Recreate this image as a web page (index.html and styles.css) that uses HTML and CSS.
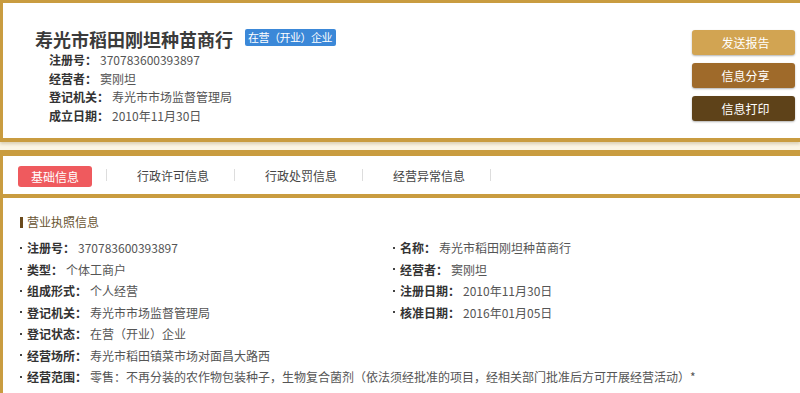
FILE: index.html
```html
<!DOCTYPE html>
<html lang="zh-CN">
<head>
<meta charset="utf-8">
<title>寿光市稻田刚坦种苗商行</title>
<link rel="stylesheet" href="styles.css">
</head>
<body>
<section class="card top">
  <div class="company">
    <div class="title-row">
      <h1 class="title">寿光市稻田刚坦种苗商行</h1>
      <span class="badge">在营（开业）企业</span>
    </div>
    <ul class="info">
      <li><b>注册号：</b><span class="v">370783600393897</span></li>
      <li><b>经营者：</b><span class="v">窦刚坦</span></li>
      <li><b>登记机关：</b><span class="v">寿光市市场监督管理局</span></li>
      <li><b>成立日期：</b><span class="v">2010年11月30日</span></li>
    </ul>
  </div>
  <div class="actions">
    <button class="btn btn-report">发送报告</button>
    <button class="btn btn-share">信息分享</button>
    <button class="btn btn-print">信息打印</button>
  </div>
</section>

<section class="card detail">
  <nav class="tabs">
    <span class="tab active">基础信息</span>
    <span class="sep"></span>
    <span class="tab">行政许可信息</span>
    <span class="sep"></span>
    <span class="tab">行政处罚信息</span>
    <span class="sep"></span>
    <span class="tab">经营异常信息</span>
    <span class="sep"></span>
  </nav>
  <div class="content">
    <h2 class="section-title"><span class="bar"></span>营业执照信息</h2>
    <ul class="fields">
      <li><b>注册号：</b><span class="v">370783600393897</span></li>
      <li><b>名称：</b><span class="v">寿光市稻田刚坦种苗商行</span></li>
      <li><b>类型：</b><span class="v">个体工商户</span></li>
      <li><b>经营者：</b><span class="v">窦刚坦</span></li>
      <li><b>组成形式：</b><span class="v">个人经营</span></li>
      <li><b>注册日期：</b><span class="v">2010年11月30日</span></li>
      <li><b>登记机关：</b><span class="v">寿光市市场监督管理局</span></li>
      <li><b>核准日期：</b><span class="v">2016年01月05日</span></li>
      <li class="full"><b>登记状态：</b><span class="v">在营（开业）企业</span></li>
      <li class="full"><b>经营场所：</b><span class="v">寿光市稻田镇菜市场对面昌大路西</span></li>
      <li class="full"><b>经营范围：</b><span class="v">零售：不再分装的农作物包装种子，生物复合菌剂（依法须经批准的项目，经相关部门批准后方可开展经营活动）*</span></li>
    </ul>
  </div>
</section>
</body>
</html>
```
FILE: styles.css
```css
* { box-sizing: border-box; }
html, body { margin: 0; padding: 0; }
body {
  width: 800px;
  height: 393px;
  overflow: hidden;
  background: #fbf5e5;
  font-family: "Noto Sans CJK SC", "Microsoft YaHei", sans-serif;
  font-size: 12px;
  color: #333;
}
ul { list-style: none; margin: 0; padding: 0; }
b { font-weight: bold; color: #333; }
.v { color: #555; margin-left: 3px; }

.card {
  background: #fff;
  border-style: solid;
  border-color: #c99c40;
  border-width: 3px 0 4px 3px;
}

.top {
  height: 142px;
  display: flex;
  justify-content: space-between;
  box-shadow: 0 2px 3px rgba(120, 90, 30, 0.25);
}
.company { padding: 25px 0 0 32px; }
.title-row {
  display: flex;
  align-items: center;
  gap: 12px;
  height: 23px;
}
.title {
  margin: 0;
  font-size: 18px;
  font-weight: bold;
  color: #3b3b3b;
  line-height: 23px;
}
.badge {
  background: #3b88d8;
  color: #fff;
  font-size: 11px;
  letter-spacing: -0.5px;
  line-height: 17px;
  padding: 0 4px 0 3px;
  border-radius: 2px;
  margin-top: -5px;
}
.info { margin-left: 14px; }
.info li { line-height: 18.5px; }

.actions {
  display: flex;
  flex-direction: column;
  gap: 8px;
  padding-top: 27px;
  margin-right: 5px;
}
.btn {
  width: 103px;
  height: 25px;
  border: 0;
  border-radius: 3px;
  color: #fff;
  font-family: inherit;
  font-size: 12px;
  padding: 0 0 0 4px;
  box-shadow: 0 1px 2px rgba(0, 0, 0, 0.3);
}
.btn-report { background: #d2a452; }
.btn-share { background: #9f6a2a; }
.btn-print { background: #5e4219; }

.detail {
  margin-top: 8px;
  border-top-width: 6px;
  height: 260px;
}
.tabs {
  height: 42px;
  border-bottom: 4px solid #c99c40;
  display: flex;
  align-items: center;
  padding-left: 15px;
}
.tab {
  font-size: 12px;
  color: #444;
  padding: 0 25px 0 30px;
  line-height: 21px;
}
.tab.active {
  background: #ef5a5e;
  color: #fff;
  border-radius: 3px;
  padding: 0 13px;
  margin-right: 14px;
  margin-top: 2px;
}
.sep {
  width: 1px;
  height: 12px;
  background: #ddd;
}

.content { padding: 14px 0 0 17px; }
.section-title {
  margin: 0 0 5px;
  font-size: 12px;
  font-weight: normal;
  color: #6a5634;
  line-height: 20px;
  display: flex;
  align-items: center;
  gap: 4px;
}
.bar {
  width: 3px;
  height: 11px;
  background: #6a4a1c;
}
.fields {
  display: grid;
  grid-template-columns: 373px 1fr;
}
.fields li {
  line-height: 21.5px;
  white-space: nowrap;
}
.fields li::before {
  content: "";
  display: inline-block;
  width: 2px;
  height: 2px;
  background: #444;
  margin-right: 5px;
  vertical-align: middle;
  position: relative;
  top: -2px;
}
.fields li.full { grid-column: 1 / -1; }
```
